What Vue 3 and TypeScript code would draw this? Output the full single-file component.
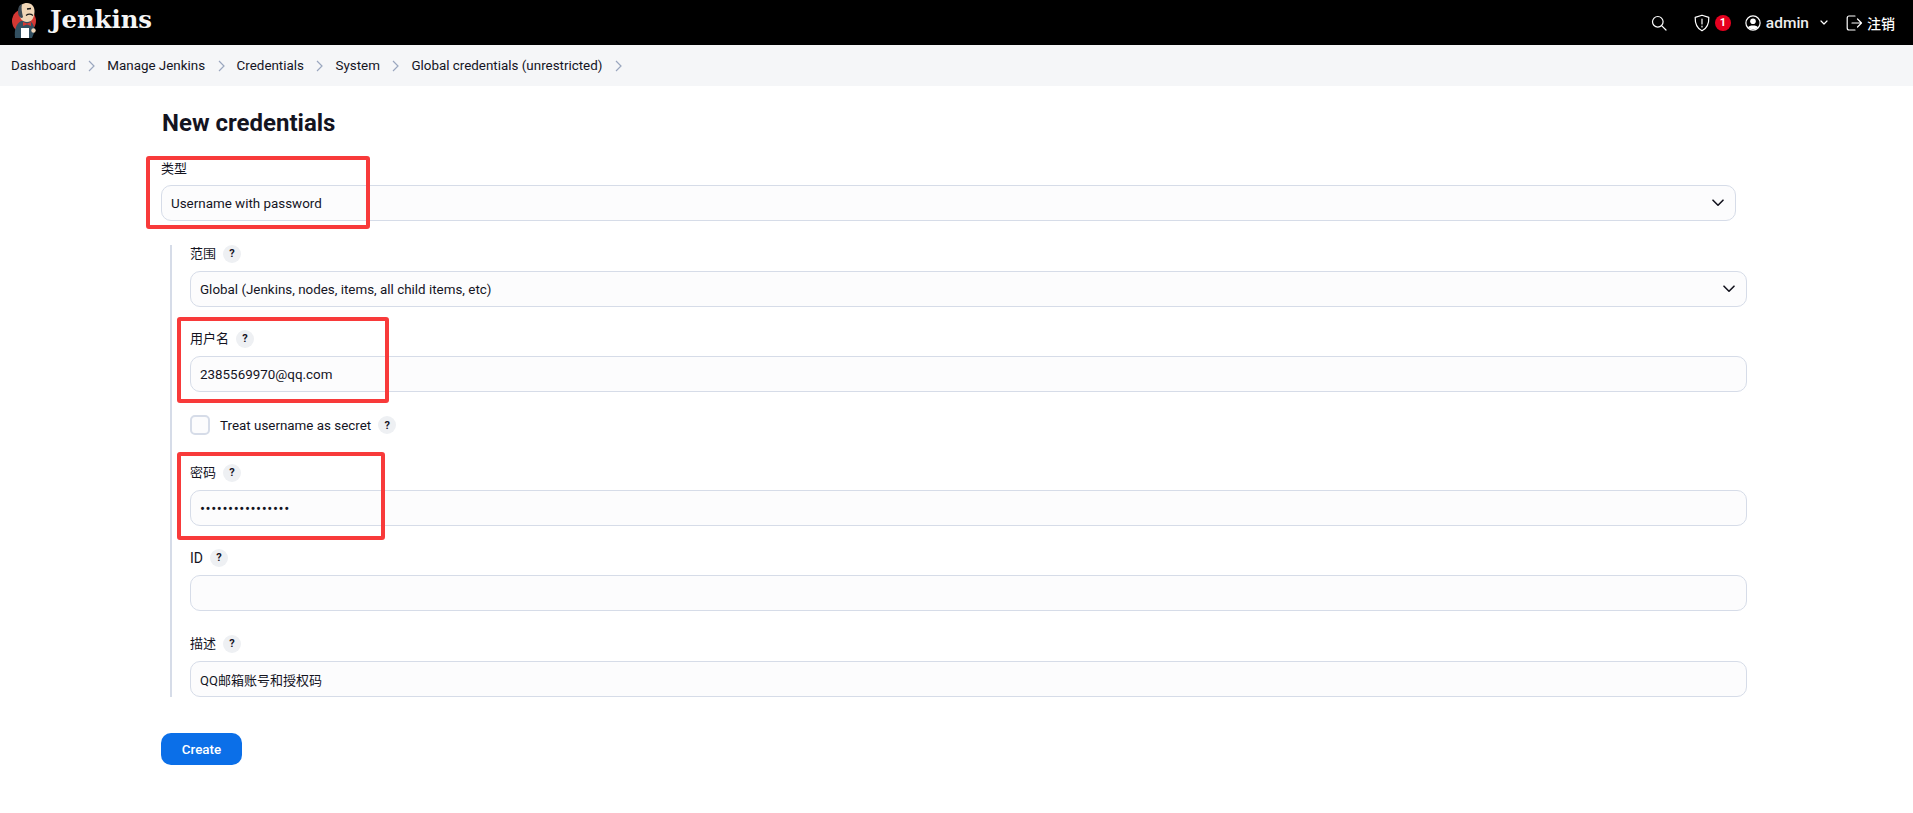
<script setup lang="ts">
const crumbs = ['Dashboard', 'Manage Jenkins', 'Credentials', 'System', 'Global credentials (unrestricted)']
</script>

<template>
  <div class="page">
    <header class="topbar">
      <div class="brand">
        <svg class="logo" viewBox="11 2 28 38" width="28" height="38">
          <circle cx="24" cy="21" r="12" fill="#d33833" />
          <path d="M15 38 C14 30 16 24 21 21 L30 21 C34 24 35 29 34 33 L32 38 Z" fill="#335061" />
          <path d="M19 10 C19 5 23 3 27 3 C32 3 35 7 34.5 12 C34 18 32 22 27 22 C22 22 20 18 19.5 15 Z" fill="#f0d6b7" />
          <path d="M18.5 15 C17 9 19 5 22 4 C21 8 22 13 23 17 C22 19 20 18 18.5 15 Z" fill="#3d4a55" />
          <path d="M27 9 L31 8.5 M26 15.5 C28 14 31 14 33 15.5" stroke="#1a1a1a" stroke-width="1.3" fill="none" />
          <path d="M23 22 L27 23.5 L31 22 L31 26 L27 24.5 L23 26 Z" fill="#d33833" />
          <rect x="21" y="28" width="8" height="10" fill="#fff" />
          <circle cx="33.5" cy="30.5" r="2.2" fill="#f0d6b7" />
        </svg>
        <span class="wordmark">Jenkins</span>
      </div>
      <div class="actions">
        <svg class="ic search" viewBox="0 0 16 16" width="16" height="16">
          <circle cx="6.8" cy="6.8" r="5.3" />
          <path d="M10.8 10.8 L15 15" />
        </svg>
        <div class="alert">
          <svg class="ic" viewBox="0 0 16 18" width="16" height="18">
            <path d="M8 1.2 L14.8 3.4 C15 9 13.5 14 8 16.8 C2.5 14 1 9 1.2 3.4 Z" />
            <path d="M8 5 V10" />
            <path d="M8 12.2 V13" />
          </svg>
          <span class="badge">1</span>
        </div>
        <div class="user">
          <svg viewBox="0 0 16 16" width="16" height="16">
            <circle cx="8" cy="8" r="7.1" fill="none" stroke="#fff" stroke-width="1.2" />
            <circle cx="8" cy="6.2" r="2.8" fill="#fff" />
            <path d="M3 12.4 C4 9.8 12 9.8 13 12.4 C11.5 14.8 4.5 14.8 3 12.4 Z" fill="#fff" />
          </svg>
          <span class="name">admin</span>
          <svg class="ic caret" viewBox="0 0 8 5" width="8" height="5">
            <path d="M1 1 L4 4 L7 1" />
          </svg>
        </div>
        <div class="logout">
          <svg class="ic" viewBox="0 0 17 16" width="17" height="16">
            <path d="M9 1 H3 C2 1 1.2 1.8 1.2 3 V13 C1.2 14.2 2 15 3 15 H9" />
            <path d="M6 8 H15.5 M11.5 4 L15.5 8 L11.5 12" />
          </svg>
          <span>注销</span>
        </div>
      </div>
    </header>

    <nav class="crumbs">
      <template v-for="c in crumbs" :key="c">
        <span class="crumb">{{ c }}</span>
        <svg class="sep" viewBox="0 0 7 12" width="7" height="12">
          <path d="M1 1 L6 6 L1 11" />
        </svg>
      </template>
    </nav>

    <main class="content">
      <h1>New credentials</h1>

      <label class="lbl type-lbl">类型</label>
      <div class="field select type-select">
        <span>Username with password</span>
        <svg class="chev" viewBox="0 0 12 8" width="12" height="8"><path d="M1 1.2 L6 6.2 L11 1.2" /></svg>
      </div>

      <section class="nested">
        <div class="row">
          <div class="lbl">范围 <span class="help">?</span></div>
          <div class="field select">
            <span>Global (Jenkins, nodes, items, all child items, etc)</span>
            <svg class="chev" viewBox="0 0 12 8" width="12" height="8"><path d="M1 1.2 L6 6.2 L11 1.2" /></svg>
          </div>
        </div>
        <div class="row">
          <div class="lbl">用户名 <span class="help">?</span></div>
          <div class="field">2385569970@qq.com</div>
        </div>
        <div class="check">
          <span class="box"></span>
          <span>Treat username as secret</span>
          <span class="help">?</span>
        </div>
        <div class="row">
          <div class="lbl">密码 <span class="help">?</span></div>
          <div class="field dots">••••••••••••••••</div>
        </div>
        <div class="row id-row">
          <div class="lbl id-lbl">ID <span class="help">?</span></div>
          <div class="field"></div>
        </div>
        <div class="row last">
          <div class="lbl">描述 <span class="help">?</span></div>
          <div class="field desc">QQ邮箱账号和授权码</div>
        </div>
      </section>

      <button class="create">Create</button>
    </main>

    <!-- red annotation boxes drawn over the screenshot -->
    <div class="mark m1"></div>
    <div class="mark m2"></div>
    <div class="mark m3"></div>
  </div>
</template>

<style>
html, body { margin: 0; background: #fff; }
</style>

<style scoped>
.page {
  position: relative; height: 813px; overflow: hidden; background: #fff; color: #14141f;
  font-family: Roboto, "Noto Sans CJK SC", sans-serif; font-size: 13.4px;
}

.topbar { height: 45px; background: #000; color: #fff; display: flex; align-items: center; justify-content: space-between; padding: 0 18px 0 11px; }
.brand { display: flex; align-items: center; gap: 11px; }
.logo { display: block; margin-top: -3px; }
.wordmark { font-family: "DejaVu Serif", "Liberation Serif", serif; font-weight: 700; font-size: 24.3px; color: #f5f5f5; margin-top: -7px; }
.actions { display: flex; align-items: center; }
.ic { fill: none; stroke: #fff; stroke-width: 1.2; stroke-linecap: round; stroke-linejoin: round; display: block; }
.search { margin-right: 27px; }
.alert { display: flex; align-items: center; gap: 5px; margin-right: 14px; }
.badge { width: 16px; height: 16px; border-radius: 50%; background: #e6001f; color: #fff; font-size: 11px; font-weight: 700; display: flex; align-items: center; justify-content: center; }
.user { display: flex; align-items: center; margin-right: 18px; font-weight: 500; font-size: 15.5px; color: #eee; }
.name { margin: 0 11px 0 5px; }
.logout { display: flex; align-items: center; gap: 4px; font-weight: 500; font-size: 14px; }

.crumbs { height: 41px; background: #f5f6f8; display: flex; align-items: center; padding-left: 11px; }
.sep { fill: none; stroke: #9ba7bf; stroke-width: 1.2; margin: 0 12px 0 12.5px; display: block; }

.content { padding: 0 166px 0 162px; }
h1 { margin: 21px 0 0; font-size: 24px; line-height: 32px; font-weight: 700; }

.lbl { display: flex; align-items: center; gap: 7px; height: 18px; font-size: 13px; line-height: 16px; }
.id-lbl { font-size: 14px; }
.type-lbl { margin: 21px 0 0 -1px; }
.field {
  box-sizing: border-box; height: 36px; border: 1.5px solid #d6dce8; border-radius: 10px; background: #fcfcfd;
  display: flex; align-items: center; padding: 0 9px; margin-top: 8px;
}
.select { justify-content: space-between; padding-right: 11px; }
.type-select { margin: 7px 11px 0 -1px; }
.chev { fill: none; stroke: #14141f; stroke-width: 1.6; stroke-linecap: round; stroke-linejoin: round; display: block; }
.dots { font-size: 15px; letter-spacing: 0.55px; padding-top: 2px; }
.desc { font-size: 13px; }

.nested { margin: 24px 0 0 8px; border-left: 2px solid #d6dce8; padding-left: 18px; }
.row { margin-bottom: 23px; }
.row.id-row { margin-bottom: 24px; }
.row.last { margin-bottom: 0; }
.help {
  width: 18px; height: 18px; border-radius: 50%; background: #eef0f3; font-size: 11px; font-weight: 700;
  display: inline-flex; align-items: center; justify-content: center; flex: none;
}
.check { display: flex; align-items: center; height: 20px; margin-bottom: 29px; }
.box { box-sizing: border-box; width: 20px; height: 20px; border: 2px solid #d6dce8; border-radius: 5px; background: #fcfcfd; margin-right: 10px; }
.check .help { margin-left: 7px; }

.create {
  display: block; margin: 36px 0 0 -1px; width: 81px; height: 32px; border: 0; border-radius: 10px; background: #0b6fe8; color: #fff;
  font: 500 13.4px Roboto, sans-serif; padding: 0;
}

.mark { position: absolute; box-sizing: border-box; border: 4px solid #f83a3a; border-radius: 3px; }
.m1 { left: 146px; top: 156px; width: 224px; height: 73px; }
.m2 { left: 177px; top: 317px; width: 212px; height: 86px; }
.m3 { left: 177px; top: 452px; width: 208px; height: 88px; }
</style>
